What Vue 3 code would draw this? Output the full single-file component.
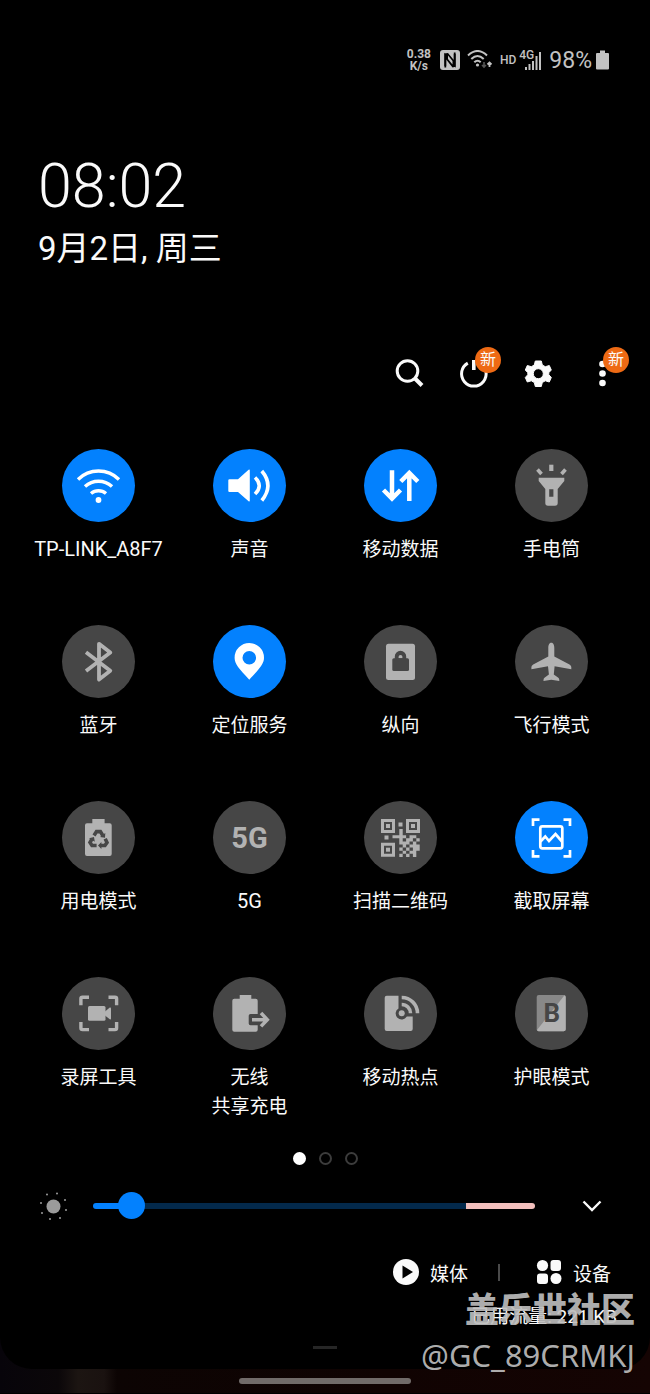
<script setup>
import { ref, computed } from 'vue'

const finder = (x, y) =>
  `<path fill-rule="evenodd" d="M${x} ${y}h14v14h-14zM${x + 3} ${y + 3}v8h8v-8z"/><path d="M${x + 5} ${y + 5}h4v4h-4z"/>`

const qrRows = ['..X.....', '..X.....', 'XXXX.XX.', '..X.XX.X', '..XXX.X.', '...X.XXX', '..X.X.XX', '...X.XX.', '..X.X.X.']
const qrModules = qrRows
  .map((row, r) => [...row].map((c, i) => (c === 'X' ? `M${28.5 + i * 3.4} ${28 + r * 3.1}h3.4v3.1h-3.4z` : '')).join(''))
  .join('')

const icons = {
  wifi: `<g fill="none" stroke="currentColor" stroke-width="3.400"><path d="M16 30.5A29 29 0 0 1 57 30.5"/><path d="M23 37.5A20 20 0 0 1 50 37.5"/><path d="M29 44.5A11.500 11.500 0 0 1 44 44.500"/></g><circle cx="36.500" cy="51" r="2.900"/>`,
  sound: `<path d="M16.500 30.300H25L35.600 20.800Q36.800 20.200 36.800 21.500V51.500Q36.800 52.800 35.600 52.200L25 43H16.500Q15.300 43 15.300 42V31.300Q15.300 30.300 16.500 30.300z"/><g fill="none" stroke="currentColor" stroke-width="3.600"><path d="M42 28.500Q50.500 36.500 42 45"/><path d="M48.800 22Q61 36.500 48.800 51.500"/></g>`,
  data: `<g fill="none" stroke="currentColor" stroke-width="4.500"><path d="M28 21.300V50M19.500 41L28 49.500L36.500 41"/><path d="M45.300 52V24M36.800 32.500L45.300 24L53.800 32.500"/></g>`,
  torch: `<path d="M34.200 15.700h4.200v6.300h-4.200z"/><path d="M22.500 20.500L26.500 25M50.500 20.500L46.500 25" fill="none" stroke="currentColor" stroke-width="3.600"/><path fill-rule="evenodd" d="M23.700 28.700H49.300V32L42.700 40V54Q42.700 56.700 40 56.700H33Q30.300 56.700 30.300 54V40L23.700 32zM34.200 40.300V47.700H38.400V40.300z"/>`,
  bluetooth: `<path d="M24 27.300L48.300 45.700L37 54.500V18.800L48.300 27.500L24 45.900" fill="none" stroke="currentColor" stroke-width="3.800" stroke-linejoin="round"/>`,
  pin: `<path fill-rule="evenodd" d="M36.300 18A14.700 14.700 0 0 1 51 32.700C51 39 46.500 43.500 36.300 54.700C26 43.500 21.600 39 21.600 32.700A14.700 14.700 0 0 1 36.300 18zM36.300 26A6.800 6.800 0 1 0 36.300 39.600A6.800 6.800 0 1 0 36.300 26z"/>`,
  lock: `<rect x="22" y="18.700" width="29" height="36.300" rx="2.500"/><g fill="#464646"><rect x="28.300" y="33.300" width="16.700" height="12.700" rx="1.500"/><path fill-rule="evenodd" d="M30.800 34V31.500A5.700 5.700 0 0 1 42.200 31.500V34zM34.600 33.300H38.400V31.800A1.900 1.900 0 0 0 34.600 31.800z"/></g>`,
  plane: `<path d="M36.300 17.800C38.600 17.800 39.300 20.500 39.300 23V31.500L54.500 39.500Q56.300 40.600 56.300 42V44.300L39.600 41.200L38.800 49.500L43 52.600Q44.300 53.600 44.300 55V56L36.300 54.800L28.500 56V55Q28.500 53.600 29.800 52.600L33.900 49.500L33 41.200L16.400 44.300V42Q16.400 40.600 18.200 39.500L33.300 31.500V23C33.300 20.500 34 17.800 36.300 17.800z"/>`,
  power: `<path d="M30.300 18H42.600V22.300H47.700Q49.700 22.300 49.700 24.300V53Q49.700 55 47.700 55H25Q23 55 23 53V24.300Q23 22.300 25 22.300H30.300z"/><g fill="none" stroke="#464646" stroke-width="3.600"><path d="M32 34.500L34.500 30.600H38.400L40.800 34.500"/><path d="M43.200 37.800L45 41.500L42.900 44.500H38.500"/><path d="M34.600 44.500H30L28 41.500L30 37.800"/></g><path fill="#464646" d="M38 36L43 36.800L43.300 32zM39.400 41V48L36 44.500zM27 37.300L32 36L32.800 40.800z"/>`,
  qr: finder(17, 18) + finder(42, 18) + finder(17, 41.7) + `<path d="M34.500 21.500h4v4h-4zM20.500 34.500h4v4h-4z"/><path d="${qrModules}"/>`,
  shot: `<g fill="none" stroke="currentColor" stroke-width="2.700"><path d="M18 25V18.600H24.500M48.500 18.600H55V25M55 49V55.400H48.500M24.500 55.400H18V49"/><rect x="25.300" y="25.300" width="22" height="22" rx="2"/><path d="M25.500 40.500L30.300 35.500L34 40L40.500 33L47 40.500"/></g>`,
  record: `<path d="M18.900 28.300V21.800Q18.900 20.200 20.500 20.200H27M46.500 20.200H53Q54.600 20.200 54.600 21.800V28.300M54.600 45V51Q54.600 52.600 53 52.600H46.500M27 52.600H20.500Q18.900 52.600 18.900 51V45" fill="none" stroke="currentColor" stroke-width="3.400"/><rect x="26" y="29" width="17.500" height="14.700" rx="1.500"/><path d="M43 34.500L47.800 30.600Q49 30.200 49 31.400V41.600Q49 42.800 47.800 42.300L43 38.500z"/>`,
  share: `<path d="M26.700 18H38.300V21.700H42.700Q44.700 21.700 44.700 23.700V37H37.500Q35.700 37 35.700 38.800V46.500Q35.700 48.300 37.500 48.300H44.700V52.700Q44.700 54.700 42.700 54.700H21.300Q19.300 54.700 19.300 52.700V23.700Q19.300 21.700 21.300 21.700H26.700z"/><path d="M39 42.700H54M48 36L54.300 42.700L48 49.400" fill="none" stroke="currentColor" stroke-width="3.500"/>`,
  hotspot: `<path d="M22.700 18.700H34.500V31.400A6 6 0 1 0 42.800 39.600H48.700V52Q48.700 54 46.700 54H22.700Q20.700 54 20.700 52V20.700Q20.700 18.700 22.700 18.700z"/><circle cx="37.700" cy="36.300" r="3"/><g fill="none" stroke="currentColor" stroke-width="3.600"><path d="M37.700 20.500A15.800 15.800 0 0 1 53.500 36.300"/><path d="M37.700 27.500A8.800 8.800 0 0 1 46.500 36.300"/></g>`,
  eye: `<rect x="21.700" y="18" width="29" height="36.300" rx="2" fill="#888"/><path d="M50.700 20V52.300Q50.700 54.300 48.700 54.300H23.700Q22.500 54.300 22 53L49.500 18.300Q50.700 18.800 50.700 20z"/><text x="36.800" y="45" text-anchor="middle" font-size="26" font-weight="700" fill="#464646">B</text>`
}

const tiles = ref([
  { label: 'TP-LINK_A8F7', icon: 'wifi', on: true, latin: true },
  { label: '声音', icon: 'sound', on: true },
  { label: '移动数据', icon: 'data', on: true },
  { label: '手电筒', icon: 'torch', on: false },
  { label: '蓝牙', icon: 'bluetooth', on: false },
  { label: '定位服务', icon: 'pin', on: true },
  { label: '纵向', icon: 'lock', on: false },
  { label: '飞行模式', icon: 'plane', on: false },
  { label: '用电模式', icon: 'power', on: false },
  { label: '5G', glyph: '5G', on: false, latin: true },
  { label: '扫描二维码', icon: 'qr', on: false },
  { label: '截取屏幕', icon: 'shot', on: true },
  { label: '录屏工具', icon: 'record', on: false },
  { label: '无线\n共享充电', icon: 'share', on: false },
  { label: '移动热点', icon: 'hotspot', on: false },
  { label: '护眼模式', icon: 'eye', on: false }
])

const page = ref(0)
const brightness = ref(6)
const trackFill = computed(() => ({ '--fill': brightness.value + '%' }))
</script>

<template>
  <div class="screen">
    <main class="panel">
      <div class="status">
        <span class="speed">0.38<br />K/s</span>
        <svg class="nfc" width="20" height="20" viewBox="0 0 20 20">
          <rect width="20" height="20" rx="3" fill="currentColor" />
          <path d="M5.300 17.500V5L14.700 15.500V2.500" fill="none" stroke="#000" stroke-width="1.800" />
          <path d="M4.400 3.500L8 3L13.800 10V4H15.600V16.800L12.500 17.500L6.200 9.500V16H4.400z" fill="#000" />
          <path d="M8 5.500L12.500 11V14.500L8 9z" fill="currentColor" />
        </svg>
        <svg class="net" width="26" height="20" viewBox="0 0 26 20">
          <g fill="none" stroke="currentColor" stroke-width="2">
            <path d="M1 5.500Q10.500 -3.500 20 5.500" />
            <path d="M4.300 9Q10.500 3 16.700 9" />
            <path d="M7.300 12.300Q10.500 9 13.700 12.300" />
            <path d="M22.500 17V12M20.500 14.500L22.500 12.500L24.500 14.500" stroke-width="1.800" />
            <path d="M17 12V17M15 15L17 17L19 15" stroke="#555" stroke-width="1.600" />
          </g>
          <circle cx="10.500" cy="15" r="1.600" fill="currentColor" />
        </svg>
        <span class="hd">HD</span>
        <span class="cell">
          <svg width="23" height="20" viewBox="0 0 23 20">
            <path d="M6 17h2v3h-2zM9.500 14h2v6h-2zM13 11h2v9h-2zM16.500 6h2v14h-2zM20 2h2v18h-2z" fill="currentColor" />
          </svg>
          <span class="gen">4G</span>
        </span>
        <span class="pct">98%</span>
        <svg class="batt" width="13" height="20" viewBox="0 0 13 20">
          <path d="M4 0.500H9V3H12Q13 3 13 4V18.500Q13 19.500 12 19.500H1Q0 19.500 0 18.500V4Q0 3 1 3H4z" fill="currentColor" />
        </svg>
      </div>

      <header class="heading">
        <time class="clock">08:02</time>
        <div class="date">9月2日, 周三</div>
      </header>

      <nav class="actions">
        <button class="action" aria-label="搜索">
          <svg width="40" height="40" viewBox="0 0 40 40" fill="none" stroke="currentColor">
            <circle cx="16.500" cy="17" r="10.300" stroke-width="3" />
            <path d="M23.500 24L31 31.500" stroke-width="4" />
          </svg>
        </button>
        <button class="action" aria-label="电源">
          <svg width="40" height="40" viewBox="0 0 40 40" fill="none" stroke="currentColor" stroke-width="3">
            <path d="M12.800 9.100A12.300 12.300 0 1 0 24.900 9.100" />
            <path d="M18.800 6V16" stroke-width="3.600" />
          </svg>
          <span class="badge">新</span>
        </button>
        <button class="action" aria-label="设置">
          <svg width="40" height="40" viewBox="0 0 40 40">
            <path
              transform="translate(-0.700 0)"
              fill="currentColor"
              stroke="currentColor"
              stroke-width="1"
              stroke-linejoin="round"
              fill-rule="evenodd"
              d="M17 7H23L24 11L27 12.700L31 11.500L33 16L30.500 18.700L30.500 20.700L33 23.500L31 28L27 26.800L24 28.500L23 32.500H17L16 28.500L13 26.800L9 28L7 23.500L9.500 20.700V18.700L7 16L9 11.500L13 12.700L16 11zM20 14.700A5 5 0 1 0 20 24.700A5 5 0 1 0 20 14.700z"
            />
          </svg>
        </button>
        <button class="action" aria-label="更多">
          <svg width="40" height="40" viewBox="0 0 40 40" fill="currentColor">
            <circle cx="19.500" cy="10" r="3.300" />
            <circle cx="19.500" cy="19.500" r="3.300" />
            <circle cx="19.500" cy="29" r="3.300" />
          </svg>
          <span class="badge">新</span>
        </button>
      </nav>

      <section class="tiles">
        <button v-for="t in tiles" :key="t.label" class="tile" :aria-pressed="t.on" @click="t.on = !t.on">
          <span class="disc" :class="{ on: t.on }">
            <span v-if="t.glyph" class="glyph">{{ t.glyph }}</span>
            <svg v-else viewBox="0 0 73 73" fill="currentColor" v-html="icons[t.icon]"></svg>
          </span>
          <span class="label" :class="{ latin: t.latin }">{{ t.label }}</span>
        </button>
      </section>

      <div class="pages">
        <button
          v-for="n in 3"
          :key="n"
          class="dot"
          :class="{ current: page === n - 1 }"
          :aria-label="'第' + n + '页'"
          @click="page = n - 1"
        ></button>
      </div>

      <div class="brightness">
        <svg width="30" height="30" viewBox="0 0 30 30" fill="#9b9b9b">
          <circle cx="15.500" cy="15.500" r="7" />
          <circle cx="9" cy="3.500" r="1" /><circle cx="19" cy="2.500" r="1" />
          <circle cx="27" cy="9" r="1" /><circle cx="28" cy="19" r="1" />
          <circle cx="22" cy="27" r="1" /><circle cx="12" cy="28" r="1" />
          <circle cx="4" cy="22" r="1" /><circle cx="3" cy="12" r="1" />
        </svg>
        <input v-model.number="brightness" type="range" min="0" max="100" aria-label="亮度" :style="trackFill" />
        <button class="expand" aria-label="展开">
          <svg width="20" height="12" viewBox="0 0 20 12">
            <path d="M1.500 1.500L10 10L18.500 1.500" fill="none" stroke="currentColor" stroke-width="2.400" />
          </svg>
        </button>
      </div>

      <div class="links">
        <button class="link">
          <svg width="26" height="26" viewBox="0 0 26 26">
            <circle cx="13" cy="13" r="13" fill="currentColor" />
            <path d="M9.500 6.500L20 13L9.500 19.500z" fill="#000" />
          </svg>
          媒体
        </button>
        <span class="divider"></span>
        <button class="link">
          <svg width="26" height="26" viewBox="0 0 26 26" fill="currentColor">
            <circle cx="6.500" cy="6.500" r="5.600" />
            <rect x="14.500" y="1" width="10.500" height="11" rx="3" />
            <rect x="1" y="14.500" width="11" height="10.500" rx="3" />
            <circle cx="20" cy="19.500" r="5.500" />
          </svg>
          设备
        </button>
      </div>

      <p class="usage">已用流量: 221 KB</p>
      <div class="handle"></div>
    </main>

    <div class="home"></div>

    <div class="stamp">
      <strong>盖乐世社区</strong>
      <span>@GC_89CRMKJ</span>
    </div>
  </div>
</template>

<style>
body {
  margin: 0;
  background: #000;
}
</style>

<style scoped>
.screen {
  position: relative;
  overflow: hidden;
  padding-bottom: 9px;
  font-family: Roboto, "Noto Sans CJK SC", sans-serif;
  color: #fafafa;
  background: linear-gradient(90deg, #07040a 0%, #0b0709 9%, #1c1512 12%, #1a1210 16%, #0c0403 18%, #100302 60%, #150403 100%);
}
.panel {
  display: flex;
  flex-direction: column;
  padding: 46px 0 20px;
  background: #000;
  border-radius: 0 0 32px 32px;
}
button {
  padding: 0;
  border: 0;
  background: none;
  color: inherit;
  font: inherit;
  cursor: pointer;
}
svg {
  display: block;
  flex: none;
}

.status {
  display: flex;
  align-items: center;
  justify-content: flex-end;
  height: 28px;
  padding-right: 41px;
  color: #c2c2c2;
}
.speed {
  font-size: 12px;
  line-height: 12px;
  font-weight: 700;
  text-align: center;
}
.nfc {
  margin-left: 9px;
}
.net {
  margin-left: 7px;
}
.hd {
  margin-left: 7px;
  font-size: 12px;
  font-weight: 500;
}
.cell {
  position: relative;
  margin-left: 3px;
}
.gen {
  position: absolute;
  top: -1px;
  left: 0;
  font-size: 12px;
  line-height: 12px;
  font-weight: 500;
}
.pct {
  margin-left: 7px;
  font-size: 23px;
}
.batt {
  margin-left: 4px;
}

.heading {
  margin-top: 80px;
  padding-left: 38px;
}
.clock {
  display: block;
  font-size: 61px;
  line-height: 64px;
  font-weight: 300;
}
.date {
  margin-top: 9px;
  font-size: 33px;
  line-height: 44px;
}

.actions {
  display: flex;
  justify-content: flex-end;
  gap: 24px;
  margin-top: 83px;
  padding-right: 27px;
}
.action {
  position: relative;
}
.badge {
  position: absolute;
  top: -7px;
  right: -6px;
  width: 26px;
  height: 26px;
  border-radius: 50%;
  background: #ee6a14;
  font-size: 16px;
  line-height: 25px;
  text-align: center;
}

.tiles {
  display: grid;
  grid-template-columns: repeat(4, 1fr);
  row-gap: 61px;
  margin-top: 55px;
  padding: 0 23px;
}
.tile {
  display: flex;
  flex-direction: column;
  align-items: center;
  gap: 13px;
}
.disc {
  display: grid;
  place-items: center;
  width: 73px;
  height: 73px;
  border-radius: 50%;
  background: #464646;
  color: #b2b2b2;
}
.disc svg {
  width: 73px;
  height: 73px;
}
.disc.on {
  background: #0381fe;
  color: #fff;
}
.glyph {
  font-size: 29px;
  font-weight: 700;
}
.label {
  font-size: 19px;
  line-height: 29px;
  white-space: pre-line;
}
.label.latin {
  font-size: 20px;
}

.pages {
  display: flex;
  justify-content: center;
  gap: 13px;
  margin-top: 31px;
}
.dot {
  box-sizing: border-box;
  width: 13px;
  height: 13px;
  border: 2px solid #3c3c3c;
  border-radius: 50%;
}
.dot.current {
  border-color: #fff;
  background: #fff;
}

.brightness {
  display: flex;
  align-items: center;
  height: 32px;
  margin-top: 25px;
  padding: 0 48px 0 38px;
}
.brightness input {
  flex: 1;
  min-width: 0;
  height: 28px;
  margin: 0 47px 0 25px;
  appearance: none;
  background: none;
}
.brightness input::-webkit-slider-runnable-track {
  height: 6px;
  border-radius: 3px;
  background: linear-gradient(90deg, #0381fe var(--fill), transparent var(--fill)),
    linear-gradient(90deg, #03294b 84.5%, #f3c0bd 84.5%);
}
.brightness input::-webkit-slider-thumb {
  appearance: none;
  width: 27px;
  height: 27px;
  margin-top: -11px;
  border-radius: 50%;
  background: #0381fe;
}

.links {
  display: flex;
  align-items: center;
  justify-content: flex-end;
  height: 32px;
  margin-top: 34px;
  padding-right: 39px;
}
.link {
  display: flex;
  align-items: center;
  gap: 11px;
  font-size: 19px;
}
.divider {
  width: 2px;
  height: 17px;
  margin: 0 36px 0 30px;
  background: #4a4a4a;
}
.usage {
  margin: 17px 33px 0 0;
  font-size: 19px;
  line-height: 24px;
  text-align: right;
}
.handle {
  width: 24px;
  height: 3px;
  margin: 17px auto 0;
  background: #262626;
}
.home {
  width: 172px;
  height: 6px;
  margin: 9px auto 0;
  border-radius: 3px;
  background: #716b69;
}
.stamp {
  position: absolute;
  right: 15px;
  bottom: 15px;
  display: flex;
  flex-direction: column;
  align-items: flex-end;
  color: rgba(190, 190, 190, 0.92);
  pointer-events: none;
}
.stamp strong {
  font-size: 34px;
  line-height: 44px;
  font-weight: 900;
}
.stamp span {
  font-family: "Noto Sans", sans-serif;
  font-size: 31px;
  line-height: 46px;
}
</style>
